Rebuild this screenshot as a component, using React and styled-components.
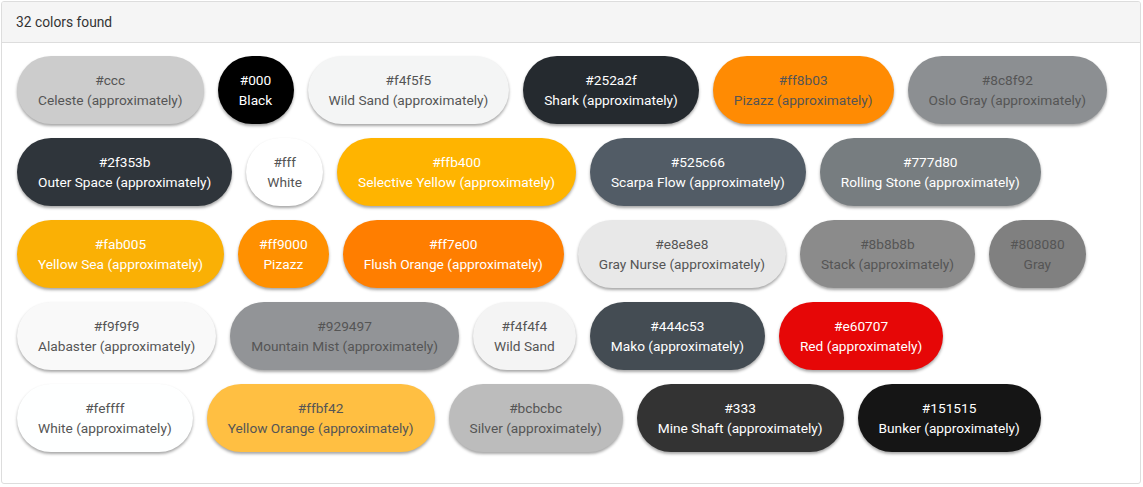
import React from 'react';
import styled, { createGlobalStyle } from 'styled-components';

const GlobalStyle = createGlobalStyle`
  body {
    margin: 0;
    background: #fff;
    font-family: Roboto, "Liberation Sans", Arial, sans-serif;
  }
`;

const Panel = styled.div`
  margin: 1px 2px 0 1px;
  border: 1px solid #ddd;
  border-radius: 3px;
  background: #fff;
  overflow: hidden;
`;

const PanelHeader = styled.div`
  height: 40px;
  display: flex;
  align-items: center;
  padding: 0 14px;
  background: #f5f5f5;
  border-bottom: 1px solid #ddd;
  color: #333;
  font-size: 13.8px;
`;

const PanelBody = styled.div`
  display: flex;
  flex-wrap: wrap;
  gap: 14px;
  padding: 13px 15px 31px;
`;

const Pill = styled.div`
  height: 68px;
  box-sizing: border-box;
  padding: 0 21px 1px;
  min-width: 76px;
  border-radius: 34px;
  background: ${props => props.bg};
  color: ${props => (props.light ? '#fff' : '#555')};
  display: flex;
  flex-direction: column;
  align-items: center;
  justify-content: center;
  font-size: 13.7px;
  line-height: 20px;
  white-space: nowrap;
  box-shadow: 0 2px 3px rgba(0, 0, 0, 0.35);
`;

const colors = [
  ['#ccc', 'Celeste (approximately)', false],
  ['#000', 'Black', true],
  ['#f4f5f5', 'Wild Sand (approximately)', false],
  ['#252a2f', 'Shark (approximately)', true],
  ['#ff8b03', 'Pizazz (approximately)', false],
  ['#8c8f92', 'Oslo Gray (approximately)', false],
  ['#2f353b', 'Outer Space (approximately)', true],
  ['#fff', 'White', false],
  ['#ffb400', 'Selective Yellow (approximately)', true],
  ['#525c66', 'Scarpa Flow (approximately)', true],
  ['#777d80', 'Rolling Stone (approximately)', true],
  ['#fab005', 'Yellow Sea (approximately)', true],
  ['#ff9000', 'Pizazz', true],
  ['#ff7e00', 'Flush Orange (approximately)', true],
  ['#e8e8e8', 'Gray Nurse (approximately)', false],
  ['#8b8b8b', 'Stack (approximately)', false],
  ['#808080', 'Gray', false],
  ['#f9f9f9', 'Alabaster (approximately)', false],
  ['#929497', 'Mountain Mist (approximately)', false],
  ['#f4f4f4', 'Wild Sand', false],
  ['#444c53', 'Mako (approximately)', true],
  ['#e60707', 'Red (approximately)', true],
  ['#feffff', 'White (approximately)', false],
  ['#ffbf42', 'Yellow Orange (approximately)', false],
  ['#bcbcbc', 'Silver (approximately)', false],
  ['#333', 'Mine Shaft (approximately)', true],
  ['#151515', 'Bunker (approximately)', true],
];

export default function App() {
  return (
    <>
      <GlobalStyle />
      <Panel>
        <PanelHeader>32 colors found</PanelHeader>
        <PanelBody>
          {colors.map(([hex, name, light]) => (
            <Pill key={hex + name} bg={hex} light={light}>
              <span>{hex}</span>
              <span>{name}</span>
            </Pill>
          ))}
        </PanelBody>
      </Panel>
    </>
  );
}
